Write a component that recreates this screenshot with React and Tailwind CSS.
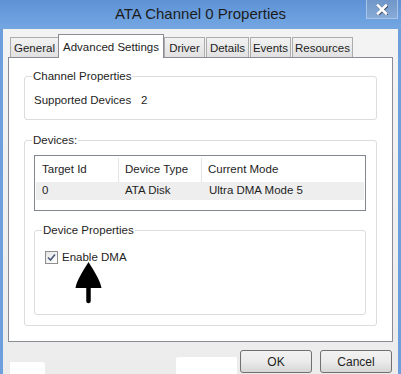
import React from 'react'

const tabs = [
    { name: 'General', w: 'w-[49px]' },
    { name: 'Advanced Settings', w: 'w-[106px]', active: true },
    { name: 'Driver', w: 'w-[41px]' },
    { name: 'Details', w: 'w-[43px]' },
    { name: 'Events', w: 'w-[41px]' },
    { name: 'Resources', w: 'w-[61px]' },
]

function GroupBox({ label, className, bodyClass, children }) {
    return (
        <fieldset className={`border border-[#dcdcdc] rounded-[3px] ${className}`}>
            <legend className="ml-[7px] px-[1px] leading-[14px]">{label}</legend>
            <div className={bodyClass}>{children}</div>
        </fieldset>
    )
}

export default function App() {
    return (
        <div className="w-[401px] h-[374px] overflow-hidden flex flex-col bg-[#6d9fdc] text-[11.5px] text-[#1e1e1e] whitespace-nowrap font-['Liberation_Sans',Arial,sans-serif]">
            {/* Title bar */}
            <div className="relative h-[29px] shrink-0 flex items-center justify-center bg-gradient-to-b from-[#5d92d6] to-[#74a7e2]">
                <span className="text-[15px] text-[#1c1c1c] mt-[-1px]">ATA Channel 0 Properties</span>
                <div className="absolute right-[3px] top-0 w-[32px] h-[19px] flex items-center justify-center border border-t-0 border-[#a9c4e6] bg-gradient-to-b from-[#6f96c8] to-[#88abd8]">
                    <svg width="12" height="11" viewBox="0 0 12 11">
                        <path d="M2 1.5 L10 9.5 M10 1.5 L2 9.5" stroke="#3a4a60" strokeWidth="3.2" strokeLinecap="square" transform="translate(0.6 0.6)" />
                        <path d="M2 1.5 L10 9.5 M10 1.5 L2 9.5" stroke="#ffffff" strokeWidth="2.6" strokeLinecap="square" />
                    </svg>
                </div>
            </div>

            {/* Client area */}
            <div className="flex-1 flex flex-col mx-[3px] bg-gradient-to-b from-[#f3f3f3] to-[#ececec] px-[5px]">
                {/* Tabs */}
                <div className="flex items-end h-[28px] pl-[2px] shrink-0">
                    {tabs.map((t) =>
                        t.active ? (
                            <div
                                key={t.name}
                                className={`${t.w} h-[24px] -mx-[1px] mb-[-1px] z-10 bg-white border border-b-0 border-[#898c95] flex justify-center pt-[4px]`}
                            >
                                {t.name}
                            </div>
                        ) : (
                            <div
                                key={t.name}
                                className={`${t.w} h-[20px] ml-[1px] first:ml-0 bg-gradient-to-b from-[#f2f2f2] to-[#e1e1e1] border border-b-0 border-[#acacac] flex justify-center items-center pt-[3px]`}
                            >
                                {t.name}
                            </div>
                        )
                    )}
                </div>

                {/* Tab page */}
                <div className="h-[285px] shrink-0 bg-white border border-[#898c95] flex flex-col px-[15px] pt-[11px]">
                    <GroupBox label="Channel Properties" className="h-[51px]" bodyClass="pl-[9px] pt-[9px] flex">
                        <span className="w-[107px]">Supported Devices</span>
                        <span>2</span>
                    </GroupBox>

                    <GroupBox label="Devices:" className="mt-[13px] h-[193px]" bodyClass="pl-[9px] pr-[10px] pt-[8px]">
                        {/* List view */}
                        <div className="h-[56px] border border-[#828790] bg-white">
                            <div className="h-[26px] flex items-center pt-[2px]">
                                <div className="w-[84px] h-full flex items-center pl-[7px] border-r border-[#e5e5e5]">Target Id</div>
                                <div className="w-[83px] h-full flex items-center pl-[6px] border-r border-[#e5e5e5]">Device Type</div>
                                <div className="flex-1 h-full flex items-center pl-[6px]">Current Mode</div>
                            </div>
                            <div className="h-[18px] mx-[1px] flex items-center bg-[#eeeeee]">
                                <div className="w-[83px] pl-[6px]">0</div>
                                <div className="w-[84px] pl-[6px]">ATA Disk</div>
                                <div className="flex-1 pl-[6px]">Ultra DMA Mode 5</div>
                            </div>
                        </div>

                        <GroupBox label="Device Properties" className="mt-[12px] h-[92px]" bodyClass="pl-[10px] pt-[12px]">
                            <div className="flex items-center gap-[4px]">
                                <div className="w-[13px] h-[13px] border border-[#8f8f8f] bg-gradient-to-br from-[#e6e6e6] to-[#ffffff] flex items-center justify-center">
                                    <svg width="9" height="9" viewBox="0 0 9 9">
                                        <path d="M1 4.5 L3.5 7 L8 1.5" fill="none" stroke="#4a5a78" strokeWidth="1.6" />
                                    </svg>
                                </div>
                                <span>Enable DMA</span>
                            </div>
                            {/* Hand-drawn arrow */}
                            <svg width="29" height="42" viewBox="0 0 29 42" className="block ml-[29px] mt-[-4px]">
                                <path d="M14.5 0 C11 6 3 17 1.5 26 L27.5 26 C26 17 18 6 14.5 0 Z" fill="#000" />
                                <path d="M14.5 24 L14.5 39" stroke="#000" strokeWidth="4.5" strokeLinecap="round" />
                            </svg>
                        </GroupBox>
                    </GroupBox>
                </div>

                {/* Buttons */}
                <div className="flex-1 relative flex items-start justify-end gap-[8px] pt-[8px] pr-[1px]">
                    <div className="absolute left-[2px] top-[20px] w-[35px] h-[14px] bg-white rounded-tr-[3px]" />
                    <div className="absolute left-[168px] top-[15px] w-[61px] h-[19px] bg-white rounded-t-[2px]" />
                    <button className="w-[72px] h-[23px] rounded-[3px] border border-[#707070] bg-gradient-to-b from-[#f2f2f2] via-[#ebebeb] to-[#d6d6d6] text-[12px]">
                        OK
                    </button>
                    <button className="w-[72px] h-[23px] rounded-[3px] border border-[#707070] bg-gradient-to-b from-[#f2f2f2] via-[#ebebeb] to-[#d6d6d6] text-[12px]">
                        Cancel
                    </button>
                </div>
            </div>
        </div>
    )
}
